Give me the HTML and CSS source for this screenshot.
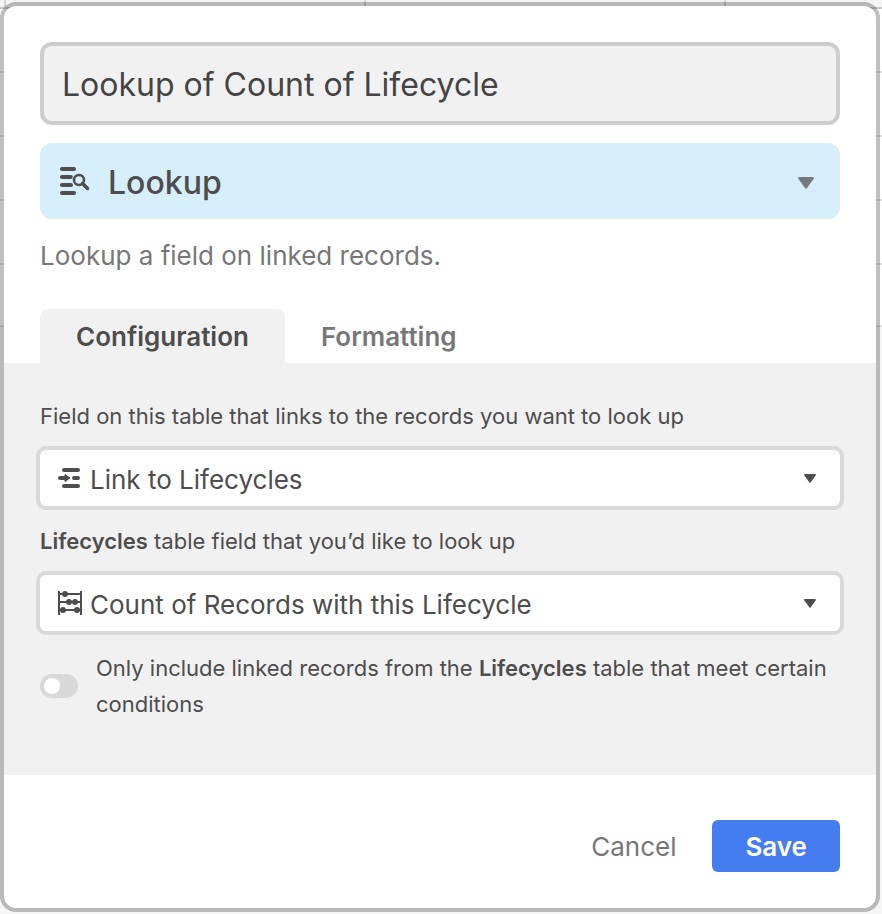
FILE: index.html
```html
<!DOCTYPE html>
<html lang="en">
<head>
<meta charset="utf-8">
<meta name="viewport" content="width=device-width, initial-scale=1">
<title>Edit field</title>
<link rel="stylesheet" href="styles.css">
</head>
<body>
<form class="dialog">
  <header class="dialog-head">
    <input class="name-input" type="text" aria-label="Field name" value="Lookup of Count of Lifecycle">
    <div class="picker picker-type">
      <select class="picker-select" aria-label="Field type">
        <option>Lookup</option>
      </select>
      <svg class="picker-icon" width="30" height="30" viewBox="0 0 30 30" aria-hidden="true">
        <g fill="none" stroke="currentColor" stroke-width="4" stroke-linecap="round">
          <path d="M2 3H14M2 11H11M2 19H11M2 27H14"/>
        </g>
        <circle cx="19" cy="14" r="7" fill="#d7eefb"/>
        <circle cx="19" cy="14" r="5" fill="none" stroke="currentColor" stroke-width="2.500"/>
        <path d="M22.500 17.500L27.500 22.500" fill="none" stroke="currentColor" stroke-width="3.500" stroke-linecap="round"/>
      </svg>
      <svg class="picker-caret" width="16" height="12" viewBox="0 0 16 12" aria-hidden="true">
        <path d="M1 0H15Q16.500 0.500 15.500 2L9 11Q8 12.500 7 11L0.500 2Q-0.500 0.500 1 0Z" fill="currentColor"/>
      </svg>
    </div>
    <p class="description">Lookup a field on linked records.</p>
    <div class="tabs" role="tablist">
      <button class="tab tab-active" type="button" role="tab" aria-selected="true">Configuration</button>
      <button class="tab" type="button" role="tab" aria-selected="false">Formatting</button>
    </div>
  </header>

  <section class="panel">
    <label class="field-label" for="link-field">Field on this table that links to the records you want to look up</label>
    <div class="picker picker-field">
      <select class="picker-select" id="link-field">
        <option>Link to Lifecycles</option>
      </select>
      <svg class="picker-icon" width="24" height="24" viewBox="0 0 24 24" aria-hidden="true">
        <g fill="none" stroke="currentColor" stroke-width="4" stroke-linecap="round">
          <path d="M6 4H20M6 20H20M16 12H20"/>
          <path d="M2 12H8"/>
        </g>
        <path d="M7 8.500L12 12L7 15.500Z" fill="currentColor" stroke="currentColor" stroke-linejoin="round"/>
      </svg>
      <svg class="picker-caret" width="12" height="9" viewBox="0 0 16 12" aria-hidden="true">
        <path d="M1 0H15Q16.500 0.500 15.500 2L9 11Q8 12.500 7 11L0.500 2Q-0.500 0.500 1 0Z" fill="currentColor"/>
      </svg>
    </div>

    <label class="field-label" for="lookup-field"><strong>Lifecycles</strong> table field that you’d like to look up</label>
    <div class="picker picker-field">
      <select class="picker-select" id="lookup-field">
        <option>Count of Records with this Lifecycle</option>
      </select>
      <svg class="picker-icon" width="24" height="24" viewBox="0 0 24 24" aria-hidden="true">
        <path d="M1 0V24M23 0V24M1 3H23M1 11H23M1 19H23" fill="none" stroke="currentColor" stroke-width="2"/>
        <g fill="currentColor">
          <circle cx="7" cy="3" r="3"/>
          <circle cx="11" cy="11" r="3"/>
          <circle cx="17" cy="11" r="3"/>
          <circle cx="5" cy="19" r="3"/>
          <circle cx="19" cy="19" r="3"/>
        </g>
      </svg>
      <svg class="picker-caret" width="12" height="9" viewBox="0 0 16 12" aria-hidden="true">
        <path d="M1 0H15Q16.500 0.500 15.500 2L9 11Q8 12.500 7 11L0.500 2Q-0.500 0.500 1 0Z" fill="currentColor"/>
      </svg>
    </div>

    <div class="condition">
      <input class="toggle" type="checkbox" role="switch" id="conditions">
      <label class="condition-label" for="conditions">Only include linked records from the <strong>Lifecycles</strong> table that meet certain conditions</label>
    </div>
  </section>

  <footer class="actions">
    <button class="button" type="button">Cancel</button>
    <button class="button button-primary" type="submit">Save</button>
  </footer>
</form>
</body>
</html>
```
FILE: styles.css
```css
* {
  box-sizing: border-box;
}

/* The table behind the dialog: header strip, rows and column rules */
body {
  margin: 0;
  padding: 2px 2px 2px 0;
  min-height: 100vh;
  font-family: Inter, "Liberation Sans", sans-serif;
  color: #4d4d4d;
  background-color: #f7f7f7;
  background-image:
    linear-gradient(#d0d3d6, #d0d3d6),
    linear-gradient(#d0d3d6, #d0d3d6),
    linear-gradient(#d0d3d6, #d0d3d6),
    linear-gradient(#c6c8cb, #c6c8cb),
    linear-gradient(#f4f4f4, #f4f4f4),
    linear-gradient(#dedede, #dedede),
    repeating-linear-gradient(#fff 0 62px, #dedede 62px 64px);
  background-repeat: no-repeat;
  background-position: 4px 0, 364px 0, 724px 0, 0 7px, 0 0, 0 325px, 0 9px;
  background-size: 2px 8px, 2px 8px, 2px 8px, 100% 2px, 100% 8px, 100% 2px, 100% 317px;
}

button,
input,
select {
  font: inherit;
  color: inherit;
}

strong {
  font-weight: 600;
}

.dialog {
  border: 4px solid rgba(0, 0, 0, 0.25);
  border-radius: 16px;
  background: #fff;
  background-clip: padding-box;
}

.dialog-head {
  padding: 36px 36px 0;
}

.name-input {
  display: block;
  width: 100%;
  padding: 19px 18px 17px;
  border: 4px solid #cccdce;
  border-radius: 12px;
  background: #f1f1f1;
  font-size: 32px;
  line-height: 39px;
  color: #444;
  outline: none;
}

/* Icon, select and caret share one grid cell */
.picker {
  display: grid;
  align-items: center;
}

.picker > * {
  grid-area: 1 / 1;
}

.picker-select {
  width: 100%;
  appearance: none;
  outline: none;
}

.picker-icon,
.picker-caret {
  pointer-events: none;
}

.picker-caret {
  justify-self: end;
}

.picker-type {
  margin-top: 18px;
}

.picker-type .picker-select {
  height: 76px;
  padding: 2px 68px 0;
  border: 0;
  border-radius: 12px;
  background: #d7eefb;
  font-size: 32px;
  font-weight: 500;
}

.picker-type .picker-icon {
  margin-left: 20px;
}

.picker-type .picker-caret {
  margin: 4px 26px 0 0;
  color: #74797c;
}

.description {
  margin: 18px 0 34px;
  font-size: 26px;
  line-height: 38px;
  color: #777;
}

.tabs {
  display: flex;
}

.tab {
  padding: 2px 36px 0;
  border: 0;
  border-radius: 8px 8px 0 0;
  background: none;
  font-size: 26px;
  font-weight: 600;
  line-height: 52px;
  color: #777;
}

.tab-active {
  background: #f1f1f1;
  color: #4d4d4d;
}

.panel {
  padding: 36px 32px 53px;
  background: #f1f1f1;
}

.field-label {
  display: block;
  padding: 0 4px;
  font-size: 22px;
  line-height: 35px;
}

.picker-field {
  margin: 12px 0 14px;
}

.picker-field .picker-select {
  height: 64px;
  padding: 2px 50px 0;
  border: 4px solid #d9d9d9;
  border-radius: 10px;
  background: #fff;
  font-size: 26px;
}

.picker-field .picker-icon {
  margin-left: 22px;
}

.picker-field .picker-caret {
  margin-right: 28px;
}

.condition {
  display: flex;
  align-items: center;
  gap: 18px;
  padding: 1px 4px 0;
}

.toggle {
  flex: none;
  width: 38px;
  height: 24px;
  margin: 0;
  padding: 4px;
  appearance: none;
  border-radius: 12px;
  background: #d9d9d9;
}

.toggle::before {
  content: "";
  display: block;
  width: 16px;
  height: 16px;
  border-radius: 8px;
  background: #fff;
}

.toggle:checked {
  background: #457df1;
}

.toggle:checked::before {
  margin-left: auto;
}

.condition-label {
  font-size: 22px;
  line-height: 36px;
}

.actions {
  display: flex;
  justify-content: flex-end;
  padding: 45px 36px 36px;
}

.button {
  padding: 2px 36px 0;
  border: 0;
  border-radius: 6px;
  background: none;
  font-size: 26px;
  line-height: 50px;
  color: #777;
}

.button-primary {
  padding: 2px 33px 0;
  background: #457df1;
  color: #fff;
  font-weight: 600;
}
```
